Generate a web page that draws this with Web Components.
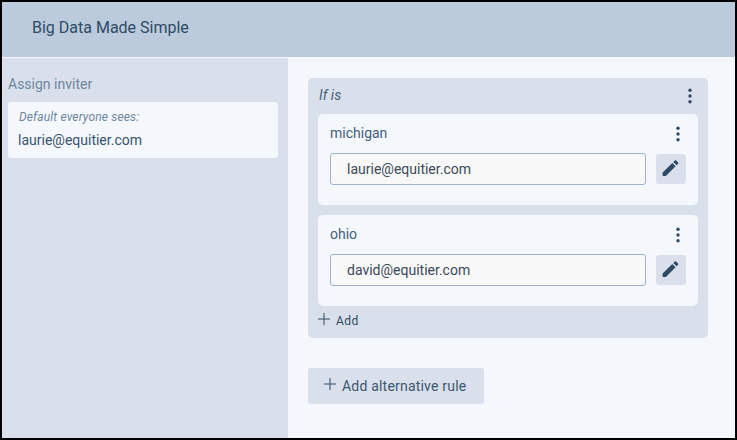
<!DOCTYPE html>
<html>
<head>
<meta charset="utf-8">
<title>Big Data Made Simple</title>
<style>
  html, body { margin: 0; height: 100%; }
  body { font-family: Roboto, "Liberation Sans", sans-serif; color: #2f4a66; }
</style>
</head>
<body>
<app-frame>
  <span slot="title">Big Data Made Simple</span>
  <inviter-side slot="side" email="laurie@equitier.com"></inviter-side>
  <rule-panel label="If is">
    <rule-card name="michigan" email="laurie@equitier.com"></rule-card>
    <rule-card name="ohio" email="david@equitier.com"></rule-card>
  </rule-panel>
  <add-button label="Add alternative rule"></add-button>
</app-frame>

<script>
const DOTS = `<svg width="4" height="16" viewBox="0 0 4 16" fill="#2f4a66"><circle cx="2" cy="2.2" r="1.7"/><circle cx="2" cy="8" r="1.7"/><circle cx="2" cy="13.8" r="1.7"/></svg>`;
const PLUS = `<svg width="12" height="12" viewBox="0 0 12 12" stroke="#2f4a66" stroke-width="1" fill="none"><path d="M6 0v12M0 6h12"/></svg>`;

class AppFrame extends HTMLElement {
  constructor() {
    super();
    this.attachShadow({ mode: "open" });
    this.shadowRoot.innerHTML = `
      <style>
        :host { display: flex; flex-direction: column; box-sizing: border-box; width: 737px; height: 440px; border: 2px solid #000; background: #f4f7fc; overflow: hidden; }
        header { height: 40px; flex: none; padding: 15px 0 0 30px; background: #bbcbdb; border-bottom: 1px solid #f4f7fc; font-size: 16px; line-height: 22px; color: #2f4a66; }
        .body { flex: 1; display: flex; min-height: 0; }
        aside { width: 286px; flex: none; background: #d9e0eb; }
        main { flex: 1; padding: 20px 27px 0 20px; display: flex; flex-direction: column; gap: 30px; align-items: flex-start; }
      </style>
      <header><slot name="title"></slot></header>
      <div class="body">
        <aside><slot name="side"></slot></aside>
        <main><slot></slot></main>
      </div>
    `;
  }
}

class InviterSide extends HTMLElement {
  constructor() {
    super();
    this.attachShadow({ mode: "open" });
    this.shadowRoot.innerHTML = `
      <style>
        :host { display: block; padding: 17px 10px 0 6px; }
        .head { font-size: 14px; line-height: 18px; color: #6f86a0; }
        .card { margin-top: 9px; height: 56px; box-sizing: border-box; padding: 8px 10px; background: #f4f7fc; border-radius: 3px; }
        .hint { font-size: 12px; line-height: 15px; font-style: italic; letter-spacing: .15px; margin-left: 1px; color: #6f86a0; }
        .mail { margin-top: 6px; font-size: 14px; line-height: 18px; color: #3a536e; }
      </style>
      <div class="head">Assign inviter</div>
      <div class="card">
        <div class="hint">Default everyone sees:</div>
        <div class="mail">${this.getAttribute("email")}</div>
      </div>
    `;
  }
}

class RulePanel extends HTMLElement {
  constructor() {
    super();
    this.attachShadow({ mode: "open" });
    this.shadowRoot.innerHTML = `
      <style>
        :host { display: block; box-sizing: border-box; width: 400px; height: 260px; padding: 0 10px; background: #d9e0eb; border-radius: 5px; }
        .top { height: 36px; display: flex; align-items: center; justify-content: space-between; padding: 0 6px 0 1px; font-size: 14px; font-style: italic; color: #46607c; }
        .top span { position: relative; top: -1px; }
        .list { display: flex; flex-direction: column; gap: 10px; }
        .add { display: flex; align-items: center; gap: 6px; height: 30px; font-size: 12px; letter-spacing: .5px; color: #2f4a66; }
        .add svg { position: relative; top: -2px; }
      </style>
      <div class="top"><span>${this.getAttribute("label")}</span>${DOTS}</div>
      <div class="list"><slot></slot></div>
      <div class="add">${PLUS}<span>Add</span></div>
    `;
  }
}

class RuleCard extends HTMLElement {
  constructor() {
    super();
    this.attachShadow({ mode: "open" });
    this.shadowRoot.innerHTML = `
      <style>
        :host { display: block; box-sizing: border-box; height: 91px; padding: 0 12px; background: #f4f7fc; border-radius: 5px; }
        .top { height: 39px; display: flex; align-items: center; justify-content: space-between; padding-right: 6px; font-size: 14px; color: #46607c; }
        .top span { position: relative; top: -1px; }
        .row { display: flex; align-items: center; gap: 10px; }
        .input { flex: 1; box-sizing: border-box; height: 32px; padding-left: 16px; display: flex; align-items: center; background: #f8f8f8; border: 1px solid #9db2cc; border-radius: 3px; font-size: 14px; color: #3c4a58; }
        .edit { flex: none; width: 30px; height: 30px; display: flex; align-items: center; justify-content: center; background: #d9e0eb; border-radius: 3px; }
        .edit svg { transform: translate(-1px, -1.5px); }
      </style>
      <div class="top"><span>${this.getAttribute("name")}</span>${DOTS}</div>
      <div class="row">
        <div class="input">${this.getAttribute("email")}</div>
        <div class="edit"><svg width="21" height="21" viewBox="0 0 24 24" fill="#2f4a66"><path d="M3 17.25V21h3.75L17.81 9.94l-3.75-3.75L3 17.25zM20.71 7.04a1 1 0 0 0 0-1.41l-2.34-2.34a1 1 0 0 0-1.41 0l-1.83 1.83 3.75 3.75 1.83-1.83z"/></svg></div>
      </div>
    `;
  }
}

class AddButton extends HTMLElement {
  constructor() {
    super();
    this.attachShadow({ mode: "open" });
    this.shadowRoot.innerHTML = `
      <style>
        :host { display: flex; align-items: center; gap: 6px; box-sizing: border-box; width: 176px; height: 36px; padding-left: 16px; background: #d9e0eb; border-radius: 3px; font-size: 14px; letter-spacing: .2px; color: #3d5671; }
        svg { position: relative; top: -2px; }
      </style>
      ${PLUS}<span>${this.getAttribute("label")}</span>
    `;
  }
}

customElements.define("app-frame", AppFrame);
customElements.define("inviter-side", InviterSide);
customElements.define("rule-panel", RulePanel);
customElements.define("rule-card", RuleCard);
customElements.define("add-button", AddButton);
</script>
</body>
</html>
